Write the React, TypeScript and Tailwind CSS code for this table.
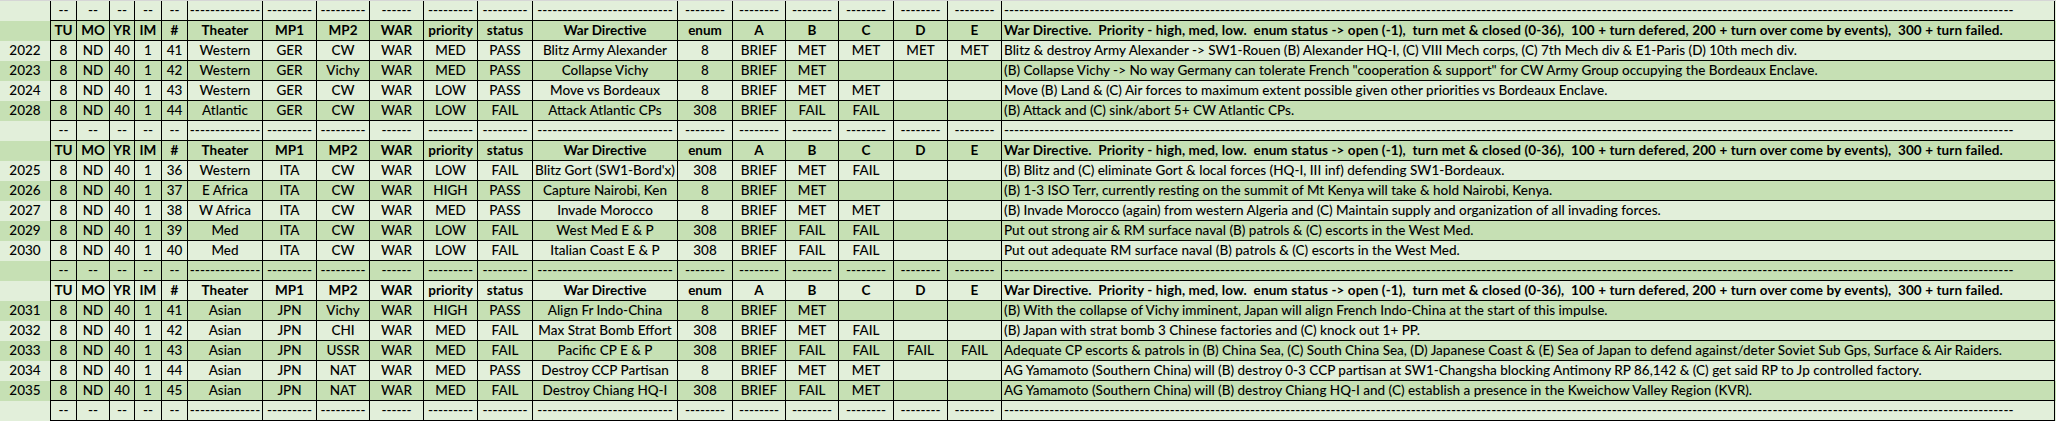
import React from "react";

type Row = string[];

const cols = [
  "w-[51px]", "w-[26px]", "w-[33px]", "w-[25px]", "w-[27px]", "w-[26px]", "w-[75px]", "w-[54px]", "w-[53px]", "w-[54px]",
  "w-[54px]", "w-[55px]", "w-[145px]", "w-[55px]", "w-[53px]", "w-[53px]", "w-[55px]", "w-[54px]", "w-[54px]", "w-[1053px]",
];

// number of hyphens typed into each cell of a divider row
const dashCount = [0, 2, 2, 2, 2, 2, 14, 9, 9, 6, 9, 9, 27, 8, 8, 8, 8, 8, 8, 201];

const header: Row = [
  "", "TU", "MO", "YR", "IM", "#", "Theater", "MP1", "MP2", "WAR", "priority", "status", "War Directive", "enum", "A", "B", "C", "D", "E",
  "War Directive.  Priority - high, med, low.  enum status -> open (-1),  turn met & closed (0-36),  100 + turn defered, 200 + turn over come by events),  300 + turn failed.",
];

const sections: Row[][] = [
  [
    ["2022", "8", "ND", "40", "1", "41", "Western", "GER", "CW", "WAR", "MED", "PASS", "Blitz Army Alexander", "8", "BRIEF", "MET", "MET", "MET", "MET",
      "Blitz & destroy Army Alexander -> SW1-Rouen (B) Alexander HQ-I, (C) VIII Mech corps, (C) 7th Mech div & E1-Paris (D) 10th mech div."],
    ["2023", "8", "ND", "40", "1", "42", "Western", "GER", "Vichy", "WAR", "MED", "PASS", "Collapse Vichy", "8", "BRIEF", "MET", "", "", "",
      "(B) Collapse Vichy -> No way Germany can tolerate French \"cooperation & support\" for CW Army Group occupying the Bordeaux Enclave."],
    ["2024", "8", "ND", "40", "1", "43", "Western", "GER", "CW", "WAR", "LOW", "PASS", "Move vs Bordeaux", "8", "BRIEF", "MET", "MET", "", "",
      "Move (B) Land & (C) Air forces to maximum extent possible given other priorities vs Bordeaux Enclave."],
    ["2028", "8", "ND", "40", "1", "44", "Atlantic", "GER", "CW", "WAR", "LOW", "FAIL", "Attack Atlantic CPs", "308", "BRIEF", "FAIL", "FAIL", "", "",
      "(B) Attack and (C) sink/abort 5+ CW Atlantic CPs."],
  ],
  [
    ["2025", "8", "ND", "40", "1", "36", "Western", "ITA", "CW", "WAR", "LOW", "FAIL", "Blitz Gort (SW1-Bord'x)", "308", "BRIEF", "MET", "FAIL", "", "",
      "(B) Blitz and (C) eliminate Gort & local forces (HQ-I, III inf) defending SW1-Bordeaux."],
    ["2026", "8", "ND", "40", "1", "37", "E Africa", "ITA", "CW", "WAR", "HIGH", "PASS", "Capture Nairobi, Ken", "8", "BRIEF", "MET", "", "", "",
      "(B) 1-3 ISO Terr, currently resting on the summit of Mt Kenya will take & hold Nairobi, Kenya."],
    ["2027", "8", "ND", "40", "1", "38", "W Africa", "ITA", "CW", "WAR", "MED", "PASS", "Invade Morocco", "8", "BRIEF", "MET", "MET", "", "",
      "(B) Invade Morocco (again) from western Algeria and (C) Maintain supply and organization of all invading forces."],
    ["2029", "8", "ND", "40", "1", "39", "Med", "ITA", "CW", "WAR", "LOW", "FAIL", "West Med E & P", "308", "BRIEF", "FAIL", "FAIL", "", "",
      "Put out strong air & RM surface naval (B) patrols & (C) escorts in the West Med."],
    ["2030", "8", "ND", "40", "1", "40", "Med", "ITA", "CW", "WAR", "LOW", "FAIL", "Italian Coast E & P", "308", "BRIEF", "FAIL", "FAIL", "", "",
      "Put out adequate RM surface naval (B) patrols & (C) escorts in the West Med."],
  ],
  [
    ["2031", "8", "ND", "40", "1", "41", "Asian", "JPN", "Vichy", "WAR", "HIGH", "PASS", "Align Fr Indo-China", "8", "BRIEF", "MET", "", "", "",
      "(B) With the collapse of Vichy imminent, Japan will align French Indo-China at the start of this impulse."],
    ["2032", "8", "ND", "40", "1", "42", "Asian", "JPN", "CHI", "WAR", "MED", "FAIL", "Max Strat Bomb Effort", "308", "BRIEF", "MET", "FAIL", "", "",
      "(B) Japan with strat bomb 3 Chinese factories and (C) knock out 1+ PP."],
    ["2033", "8", "ND", "40", "1", "43", "Asian", "JPN", "USSR", "WAR", "MED", "FAIL", "Pacific CP E & P", "308", "BRIEF", "FAIL", "FAIL", "FAIL", "FAIL",
      "Adequate CP escorts & patrols in (B) China Sea, (C) South China Sea, (D) Japanese Coast & (E) Sea of Japan to defend against/deter Soviet Sub Gps, Surface & Air Raiders."],
    ["2034", "8", "ND", "40", "1", "44", "Asian", "JPN", "NAT", "WAR", "MED", "PASS", "Destroy CCP Partisan", "8", "BRIEF", "MET", "MET", "", "",
      "AG Yamamoto (Southern China) will (B) destroy 0-3 CCP partisan at SW1-Changsha blocking Antimony RP 86,142 & (C) get said RP to Jp controlled factory."],
    ["2035", "8", "ND", "40", "1", "45", "Asian", "JPN", "NAT", "WAR", "MED", "FAIL", "Destroy Chiang HQ-I", "308", "BRIEF", "FAIL", "MET", "", "",
      "AG Yamamoto (Southern China) will (B) destroy Chiang HQ-I and (C) establish a presence in the Kweichow Valley Region (KVR)."],
  ],
];

type Line = { kind: "dash" | "head" | "data"; cells: Row };

function SheetRow({ line, band }: { line: Line; band: number }) {
  const bg = band % 2 === 0 ? "bg-[#e2efda]" : "bg-[#c6e0b4]";
  const weight = line.kind === "head" ? "font-bold" : "font-medium";
  return (
    <div className={`flex h-[20px] ${bg} ${weight}`}>
      {cols.map((w, i) => {
        const last = i === cols.length - 1;
        const border = i === 0 ? "border-r border-black" : "border-r border-b border-black";
        const align = last ? "justify-start pl-[2px]" : "justify-center";
        const track = last && line.kind === "head" ? "tracking-[0.1px]" : "";
        const text = line.kind === "dash" ? "-".repeat(dashCount[i]) : line.cells[i];
        return (
          <div key={i} className={`flex shrink-0 items-center whitespace-pre ${w} ${border} ${align} ${track}`}>
            {text}
          </div>
        );
      })}
    </div>
  );
}

export default function App() {
  const lines: Line[] = [{ kind: "dash", cells: [] }];
  sections.forEach((rows) => {
    lines.push({ kind: "head", cells: header });
    rows.forEach((r) => lines.push({ kind: "data", cells: r }));
    lines.push({ kind: "dash", cells: [] });
  });

  return (
    <div className="min-h-screen w-[2056px] bg-[#e2efda] font-['Lato',sans-serif] text-[13.5px] leading-none text-black">
      <div className="h-px bg-[#d6d6d6]" />
      {lines.map((line, i) => (
        <SheetRow key={i} line={line} band={i} />
      ))}
    </div>
  );
}
